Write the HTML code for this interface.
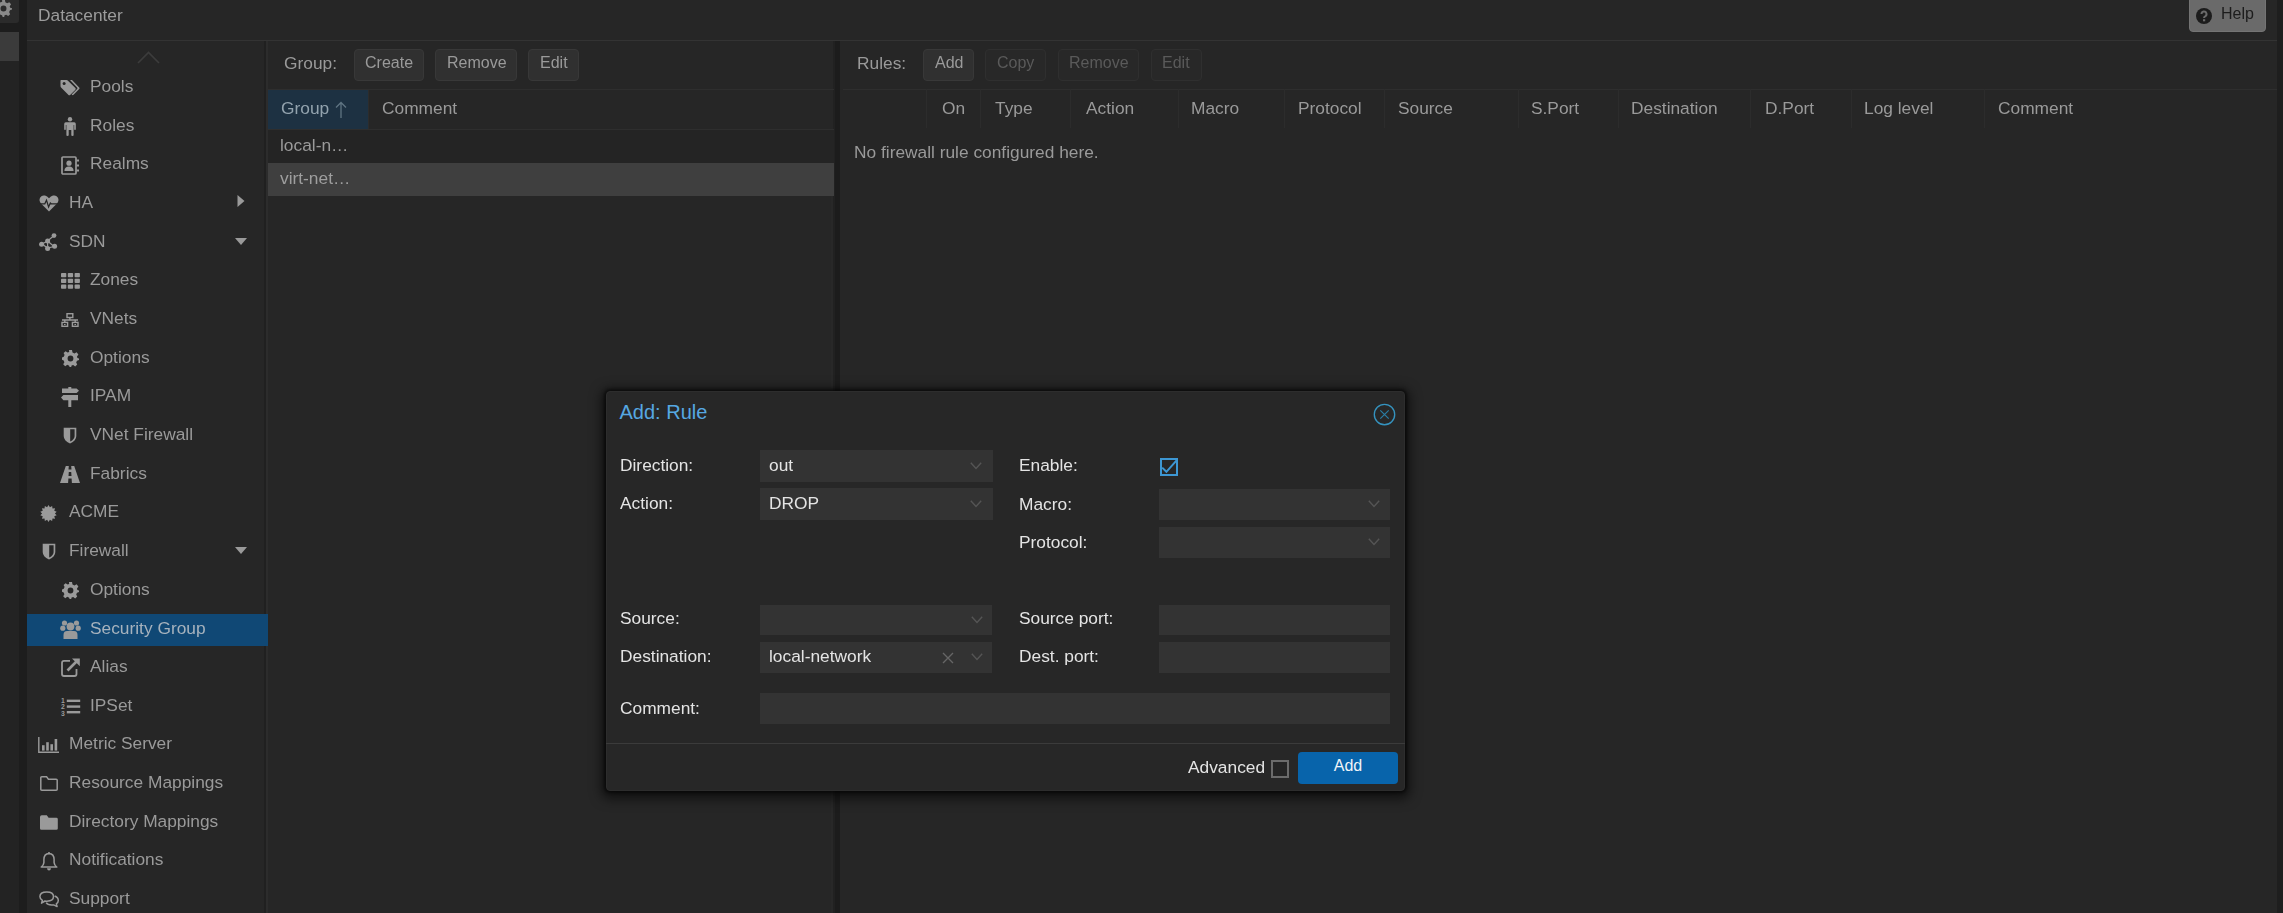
<!DOCTYPE html>
<html><head><meta charset="utf-8">
<style>
html,body{margin:0;padding:0;width:2283px;height:913px;overflow:hidden;background:#262626;}
body{position:relative;font-family:"Liberation Sans",sans-serif;font-size:17.33px;line-height:17.33px;color:#9a9a9a;}
.a{position:absolute;}
.t{position:absolute;will-change:transform;white-space:nowrap;font-size:17.33px;line-height:17.33px;}
.bt{font-size:16px;line-height:16px;}
.ico{position:absolute;overflow:visible;}
.btn{position:absolute;box-sizing:border-box;top:49px;height:32px;background:#303030;border:1px solid #383838;border-radius:4px;}
.btn.dis{background:#282828;border-color:#2f2f2f;}
.hsep{position:absolute;top:89px;height:39px;width:1px;background:#2c2c2c;}
.lbl{position:absolute;will-change:transform;white-space:nowrap;color:#e4e4e4;font-size:17.33px;line-height:17.33px;}
.fld{position:absolute;box-sizing:border-box;background:#333333;}
</style></head>
<body>
<!-- left strip -->
<div class="a" style="left:0;top:0;width:27px;height:913px;background:#1d1d1d"></div>
<div class="a" style="left:0;top:0;width:19px;height:23px;background:#2b2b2b;border-radius:0 0 3px 0"></div>
<svg class="ico" style="left:-5.5px;top:0px" width="17" height="17" viewBox="0 0 20 20"><path fill="#8a8a8a" fill-rule="evenodd" d="M8.3 0 H11.7 L12.2 2.7 Q13.4 3.1 14.3 3.8 L16.8 2.6 L18.9 5 L17.3 7.3 Q17.7 8.4 17.8 9 L20 9.7 V11.3 L17.6 12.2 Q17.2 13.3 16.6 14.2 L17.8 16.7 L15.5 18.8 L13.2 17.3 Q12.3 17.7 11.3 18 L10.8 20 H9 L8.3 18 Q7.1 17.7 6.3 17.1 L3.8 18.7 L1.5 16.6 L2.9 14.1 Q2.3 13.2 2 12.2 L0 11.4 V8.6 L2.1 7.9 Q2.5 6.7 3.1 5.9 L1.9 3.5 L4.2 1.4 L6.6 2.9 Q7.5 2.4 8.5 2.2 Z M10 6.5 A3.5 3.5 0 1 0 10 13.5 A3.5 3.5 0 1 0 10 6.5Z"/></svg>
<div class="a" style="left:0;top:32px;width:19px;height:29px;background:#3b3b3b"></div>
<div class="a" style="left:0;top:61px;width:19px;height:852px;background:#232323"></div>

<!-- header -->
<div class="a" style="left:27px;top:0;width:2250px;height:41px;background:#262626"></div>
<div class="t" style="left:37.8px;top:6.8px;color:#9c9c9c">Datacenter</div>
<div class="a" style="left:27px;top:40px;width:2250px;height:1px;background:#333333"></div>
<div class="a" style="left:2277px;top:0;width:6px;height:913px;background:#1e1e1e"></div>

<!-- help button -->
<div class="a" style="left:2189px;top:-4px;width:77px;height:36px;box-sizing:border-box;background:#6a6a6a;border:1px solid #747474;border-radius:4px"></div>
<svg class="ico" style="left:2196px;top:8px" width="16" height="16" viewBox="0 0 16 16"><circle cx="8" cy="8" r="8" fill="#1c1c1c"/><path d="M5.5 6.1a2.5 2.5 0 1 1 3.6 2.2c-.7.3-1 .6-1 1.3v.5" stroke="#6a6a6a" stroke-width="2" fill="none"/><rect x="7" y="11.2" width="2.2" height="2.1" fill="#6a6a6a"/></svg>
<div class="t bt" style="left:2221.4px;top:5.7px;color:#1c1c1c">Help</div>

<!-- nav panel -->
<div class="a" style="left:264px;top:41px;width:2px;height:872px;background:#202020"></div>
<div class="a" style="left:266px;top:41px;width:2px;height:872px;background:#2c2c2c"></div>
<div class="t" style="left:89.5px;top:78.10px;color:#9a9a9a">Pools</div>
<svg class="ico" style="left:60.0px;top:79.3px" width="20" height="17" viewBox="0 0 20 17"><path d="M0.5 1.5 L0.5 7 Q0.5 8 1.3 8.8 L8.5 16 Q9.3 16.7 10.1 16 L15.4 10.7 Q16.1 9.9 15.4 9.1 L8.2 1.9 Q7.4 1.1 6.4 1.1 L1 1.1 Z" fill="#9a9a9a"/><circle cx="4.1" cy="4.6" r="1.5" fill="#262626"/><path d="M10 1.1 L12 1.1 L19.2 8.4 Q20 9.3 19.2 10.1 L13.5 15.8 Q12.7 16.6 11.9 15.8 L11.6 15.6 L17.1 10.1 Q17.9 9.3 17.1 8.4 Z" fill="#9a9a9a"/></svg>
<div class="t" style="left:89.5px;top:116.76px;color:#9a9a9a">Roles</div>
<svg class="ico" style="left:64.0px;top:117.0px" width="12" height="19" viewBox="0 0 12 19"><circle cx="6" cy="2.3" r="2.2" fill="#9a9a9a"/><path d="M1.8 5.3 H10.2 Q11.8 5.3 11.8 7 V12.3 Q11.8 13 11 13 Q10.2 13 10.2 12.3 V8 H9.6 V18.2 Q9.6 19 8.6 19 Q7.3 19 7.3 18.2 V13 H4.7 V18.2 Q4.7 19 3.4 19 Q2.4 19 2.4 18.2 V8 H1.8 V12.3 Q1.8 13 1 13 Q0.2 13 0.2 12.3 V7 Q0.2 5.3 1.8 5.3Z" fill="#9a9a9a"/></svg>
<div class="t" style="left:89.5px;top:155.42px;color:#9a9a9a">Realms</div>
<svg class="ico" style="left:61.0px;top:155.6px" width="18" height="19" viewBox="0 0 18 19"><rect x="1" y="1" width="14" height="17" rx="1" fill="none" stroke="#9a9a9a" stroke-width="1.7"/><circle cx="8" cy="7.2" r="2.6" fill="#9a9a9a"/><path d="M3.4 15 Q3.4 10.5 8 10.5 Q12.6 10.5 12.6 15Z" fill="#9a9a9a"/><rect x="15.5" y="3.5" width="2.5" height="2" fill="#9a9a9a"/><rect x="15.5" y="8.5" width="2.5" height="2" fill="#9a9a9a"/><rect x="15.5" y="13.5" width="2.5" height="2" fill="#9a9a9a"/></svg>
<div class="t" style="left:68.5px;top:194.08px;color:#9a9a9a">HA</div>
<svg class="ico" style="left:38.5px;top:195.3px" width="20" height="17" viewBox="0 0 20 17"><path d="M10 16.5 L2 8.5 Q-0.5 5.5 1.2 2.5 Q3 -0.3 6 0.6 Q8.2 1.3 10 3.3 Q11.8 1.3 14 0.6 Q17 -0.3 18.8 2.5 Q20.5 5.5 18 8.5 Z" fill="#9a9a9a"/><path d="M0.5 8.8 H5.8 L7.5 5.2 L9.6 12 L11.3 8 L12.3 8.8 H19.5" fill="none" stroke="#262626" stroke-width="1.2"/></svg>
<div class="t" style="left:68.5px;top:232.74px;color:#9a9a9a">SDN</div>
<svg class="ico" style="left:38.5px;top:233.4px" width="20" height="18" viewBox="0 0 20 18"><path d="M3 11 L8.6 8 L15 2.5 M8.6 8 L15 13.5 M3 11 L8.6 15 L15 13.5 M8.6 8 L8.6 15" stroke="#9a9a9a" stroke-width="1.2" fill="none"/><circle cx="15" cy="2.6" r="2.4" fill="#9a9a9a"/><circle cx="8.6" cy="8" r="2.5" fill="#9a9a9a"/><circle cx="2.6" cy="11.2" r="2.5" fill="#9a9a9a"/><circle cx="15.6" cy="13.2" r="2.5" fill="#9a9a9a"/><circle cx="8.6" cy="15.5" r="2.5" fill="#9a9a9a"/></svg>
<div class="t" style="left:89.5px;top:271.40px;color:#9a9a9a">Zones</div>
<svg class="ico" style="left:60.5px;top:273.1px" width="19" height="16" viewBox="0 0 19 16"><rect x="0" y="0" width="5.3" height="4.2" rx="0.8" fill="#9a9a9a"/><rect x="6.8" y="0" width="5.3" height="4.2" rx="0.8" fill="#9a9a9a"/><rect x="13.6" y="0" width="5.3" height="4.2" rx="0.8" fill="#9a9a9a"/><rect x="0" y="5.8" width="5.3" height="4.2" rx="0.8" fill="#9a9a9a"/><rect x="6.8" y="5.8" width="5.3" height="4.2" rx="0.8" fill="#9a9a9a"/><rect x="13.6" y="5.8" width="5.3" height="4.2" rx="0.8" fill="#9a9a9a"/><rect x="0" y="11.6" width="5.3" height="4.2" rx="0.8" fill="#9a9a9a"/><rect x="6.8" y="11.6" width="5.3" height="4.2" rx="0.8" fill="#9a9a9a"/><rect x="13.6" y="11.6" width="5.3" height="4.2" rx="0.8" fill="#9a9a9a"/></svg>
<div class="t" style="left:89.5px;top:310.06px;color:#9a9a9a">VNets</div>
<svg class="ico" style="left:61.0px;top:312.8px" width="18" height="14" viewBox="0 0 18 14"><rect x="6" y="0.7" width="5.8" height="3.8" fill="none" stroke="#9a9a9a" stroke-width="1.4"/><path d="M8.9 4.5 V6.6 M1 7 H17 M3.8 7 V9 M14.2 7 V9" stroke="#9a9a9a" stroke-width="1.4" fill="none"/><rect x="1" y="9.4" width="5.6" height="3.9" fill="none" stroke="#9a9a9a" stroke-width="1.4"/><rect x="11.4" y="9.4" width="5.6" height="3.9" fill="none" stroke="#9a9a9a" stroke-width="1.4"/><rect x="3" y="11" width="1.6" height="1" fill="#9a9a9a"/><rect x="13.4" y="11" width="1.6" height="1" fill="#9a9a9a"/></svg>
<div class="t" style="left:89.5px;top:348.72px;color:#9a9a9a">Options</div>
<svg class="ico" style="left:61.5px;top:349.9px" width="17" height="17" viewBox="0 0 17 17"><path fill="#9a9a9a" fill-rule="evenodd" d="M7 0 H10 L10.5 2.4 Q11.6 2.8 12.4 3.4 L14.6 2.3 L16.4 4.4 L15 6.5 Q15.3 7.5 15.4 8 L17 8.6 V10 L15 10.7 Q14.7 11.6 14.2 12.4 L15.2 14.6 L13.2 16.4 L11.2 15 Q10.4 15.4 9.6 15.6 L9.2 17 H7.6 L7 15.5 Q6 15.2 5.3 14.8 L3.2 16.2 L1.2 14.3 L2.4 12.2 Q1.9 11.4 1.7 10.5 L0 9.8 V7.4 L1.8 6.8 Q2.1 5.8 2.6 5.1 L1.6 3 L3.6 1.2 L5.6 2.5 Q6.4 2.1 7.2 1.9 Z M8.5 5.6 A2.9 2.9 0 1 0 8.5 11.4 A2.9 2.9 0 1 0 8.5 5.6Z"/></svg>
<div class="t" style="left:89.5px;top:387.38px;color:#9a9a9a">IPAM</div>
<svg class="ico" style="left:61.0px;top:387.1px" width="18" height="20" viewBox="0 0 18 20"><path fill="#9a9a9a" d="M7.3 0 H10.3 V1.6 H15.6 L18 3.8 L15.6 6 H1 V1.6 H7.3Z M2.4 8 H17 V13.2 H2.4 L0 10.6Z M7.3 13.2 H10.3 V20 H7.3Z"/></svg>
<div class="t" style="left:89.5px;top:426.04px;color:#9a9a9a">VNet Firewall</div>
<svg class="ico" style="left:63.0px;top:427.2px" width="14" height="17" viewBox="0 0 14 17"><path d="M0.7 0.7 H13.3 V9 Q13.3 13.5 7 16.6 Q0.7 13.5 0.7 9Z" fill="#9a9a9a"/><path d="M7.2 2.3 H11.6 V9 Q11.6 12.3 7.2 14.6Z" fill="#262626"/></svg>
<div class="t" style="left:89.5px;top:464.70px;color:#9a9a9a">Fabrics</div>
<svg class="ico" style="left:60.0px;top:465.9px" width="20" height="17" viewBox="0 0 20 17"><path fill="#9a9a9a" d="M5.8 0 H8.8 L8.5 3.5 H11.5 L11.2 0 H14.2 L20 17 H11.9 L11.6 12.5 H8.4 L8.1 17 H0Z M8.8 6 L8.5 10 H11.5 L11.2 6Z"/></svg>
<div class="t" style="left:68.5px;top:503.36px;color:#9a9a9a">ACME</div>
<svg class="ico" style="left:40.0px;top:504.6px" width="17" height="17" viewBox="0 0 17 17"><path fill="#9a9a9a" d="M8.50 0.10 L9.92 2.26 L12.14 0.93 L12.49 3.50 L15.07 3.26 L14.27 5.72 L16.69 6.63 L14.90 8.50 L16.69 10.37 L14.27 11.28 L15.07 13.74 L12.49 13.50 L12.14 16.07 L9.92 14.74 L8.50 16.90 L7.08 14.74 L4.86 16.07 L4.51 13.50 L1.93 13.74 L2.73 11.28 L0.31 10.37 L2.10 8.50 L0.31 6.63 L2.73 5.72 L1.93 3.26 L4.51 3.50 L4.86 0.93 L7.08 2.26Z"/></svg>
<div class="t" style="left:68.5px;top:542.02px;color:#9a9a9a">Firewall</div>
<svg class="ico" style="left:41.5px;top:543.2px" width="14" height="17" viewBox="0 0 14 17"><path d="M0.7 0.7 H13.3 V9 Q13.3 13.5 7 16.6 Q0.7 13.5 0.7 9Z" fill="#9a9a9a"/><path d="M7.2 2.3 H11.6 V9 Q11.6 12.3 7.2 14.6Z" fill="#262626"/></svg>
<div class="t" style="left:89.5px;top:580.68px;color:#9a9a9a">Options</div>
<svg class="ico" style="left:61.5px;top:581.9px" width="17" height="17" viewBox="0 0 17 17"><path fill="#9a9a9a" fill-rule="evenodd" d="M7 0 H10 L10.5 2.4 Q11.6 2.8 12.4 3.4 L14.6 2.3 L16.4 4.4 L15 6.5 Q15.3 7.5 15.4 8 L17 8.6 V10 L15 10.7 Q14.7 11.6 14.2 12.4 L15.2 14.6 L13.2 16.4 L11.2 15 Q10.4 15.4 9.6 15.6 L9.2 17 H7.6 L7 15.5 Q6 15.2 5.3 14.8 L3.2 16.2 L1.2 14.3 L2.4 12.2 Q1.9 11.4 1.7 10.5 L0 9.8 V7.4 L1.8 6.8 Q2.1 5.8 2.6 5.1 L1.6 3 L3.6 1.2 L5.6 2.5 Q6.4 2.1 7.2 1.9 Z M8.5 5.6 A2.9 2.9 0 1 0 8.5 11.4 A2.9 2.9 0 1 0 8.5 5.6Z"/></svg>
<div class="a" style="left:27px;top:614px;width:240.5px;height:32px;background:#104875"></div>
<div class="t" style="left:89.5px;top:619.94px;color:#a6b2bd">Security Group</div>
<svg class="ico" style="left:59.5px;top:619.5px" width="21" height="19" viewBox="0 0 21 19"><circle cx="4.5" cy="3" r="2.6" fill="#9a9a9a"/><circle cx="16.5" cy="3" r="2.6" fill="#9a9a9a"/><circle cx="2.8" cy="8.2" r="2.6" fill="#9a9a9a"/><circle cx="18.2" cy="8.2" r="2.6" fill="#9a9a9a"/><circle cx="10.5" cy="6.5" r="3.9" fill="#9a9a9a"/><path d="M3.5 19 V15 Q3.5 11 7 11 H14 Q17.5 11 17.5 15 V19 Z" fill="#9a9a9a" /><rect x="4" y="17" width="13" height="2" rx="1" fill="#9a9a9a"/></svg>
<div class="t" style="left:89.5px;top:658.00px;color:#9a9a9a">Alias</div>
<svg class="ico" style="left:60.5px;top:658.2px" width="19" height="19" viewBox="0 0 19 19"><path d="M9 2.8 H3 Q1 2.8 1 4.8 V16 Q1 18 3 18 H13.5 Q15.5 18 15.5 16 V11" fill="none" stroke="#9a9a9a" stroke-width="1.8"/><path d="M6.5 12.5 L16 3" stroke="#9a9a9a" stroke-width="2.6" fill="none"/><path d="M11 0.5 H18.8 V8.3Z" fill="#9a9a9a"/></svg>
<div class="t" style="left:89.5px;top:696.66px;color:#9a9a9a">IPSet</div>
<svg class="ico" style="left:60.5px;top:696.9px" width="19" height="19" viewBox="0 0 19 19"><text x="0" y="5.6" font-family="Liberation Sans" font-size="6.8" font-weight="bold" fill="#9a9a9a">1</text><text x="0" y="12" font-family="Liberation Sans" font-size="6.8" font-weight="bold" fill="#9a9a9a">2</text><text x="0" y="18.6" font-family="Liberation Sans" font-size="6.8" font-weight="bold" fill="#9a9a9a">3</text><rect x="5.8" y="2.6" width="13.4" height="2.4" fill="#9a9a9a"/><rect x="5.8" y="8.4" width="13.4" height="2.4" fill="#9a9a9a"/><rect x="5.8" y="14" width="13.4" height="2.4" fill="#9a9a9a"/></svg>
<div class="t" style="left:68.5px;top:735.32px;color:#9a9a9a">Metric Server</div>
<svg class="ico" style="left:38.0px;top:737.0px" width="21" height="16" viewBox="0 0 21 16"><path d="M0.8 0 V15.2 H21" stroke="#9a9a9a" stroke-width="1.4" fill="none"/><rect x="4" y="8.2" width="2.6" height="5.4" fill="#9a9a9a"/><rect x="8.2" y="5.2" width="2.6" height="8.4" fill="#9a9a9a"/><rect x="12.4" y="7.2" width="2.6" height="6.4" fill="#9a9a9a"/><rect x="16.6" y="2" width="2.6" height="11.6" fill="#9a9a9a"/></svg>
<div class="t" style="left:68.5px;top:773.98px;color:#9a9a9a">Resource Mappings</div>
<svg class="ico" style="left:39.5px;top:776.2px" width="18" height="15" viewBox="0 0 18 15"><path d="M1.8 0.8 H6.6 L8.4 3.2 H16.2 Q17.2 3.2 17.2 4.2 V13.2 Q17.2 14.2 16.2 14.2 H1.8 Q0.8 14.2 0.8 13.2 V1.8 Q0.8 0.8 1.8 0.8Z" fill="none" stroke="#9a9a9a" stroke-width="1.5"/></svg>
<div class="t" style="left:68.5px;top:812.64px;color:#9a9a9a">Directory Mappings</div>
<svg class="ico" style="left:39.5px;top:814.8px" width="18" height="15" viewBox="0 0 18 15"><path d="M1.8 0.3 H6.8 L8.6 2.8 H16.4 Q17.8 2.8 17.8 4.2 V13.4 Q17.8 14.8 16.4 14.8 H1.4 Q0 14.8 0 13.4 V2.1 Q0 0.3 1.8 0.3Z" fill="#9a9a9a"/></svg>
<div class="t" style="left:68.5px;top:851.30px;color:#9a9a9a">Notifications</div>
<svg class="ico" style="left:39.5px;top:851.5px" width="18" height="19" viewBox="0 0 18 19"><path d="M9 1.4 Q14.1 1.6 14.1 7.6 V10.6 Q14.3 13.2 16.8 15 H1.2 Q3.7 13.2 3.9 10.6 V7.6 Q3.9 1.6 9 1.4Z" fill="none" stroke="#9a9a9a" stroke-width="1.5" stroke-linejoin="round"/><circle cx="9" cy="1.2" r="1.1" fill="#9a9a9a"/><path d="M7 16.2 Q7.3 18.4 9 18.4 Q10.7 18.4 11 16.2Z" fill="#9a9a9a"/></svg>
<div class="t" style="left:68.5px;top:889.96px;color:#9a9a9a">Support</div>
<svg class="ico" style="left:38.5px;top:891.2px" width="20" height="17" viewBox="0 0 20 17"><path d="M7.8 1 Q14.5 1 14.5 5.6 Q14.5 10.2 7.8 10.2 Q6.9 10.2 6 10 L2.5 12.2 L3.4 9.4 Q0.9 8.1 0.9 5.6 Q0.9 1 7.8 1Z" fill="none" stroke="#9a9a9a" stroke-width="1.5" stroke-linejoin="round"/><path d="M15.6 5 Q19.3 6.3 19.3 9.4 Q19.3 11.6 17.3 12.8 L18.1 15.6 L14.6 13.9 Q13.6 14 12.6 14 Q8.6 14 7.2 11.6" fill="none" stroke="#9a9a9a" stroke-width="1.5" stroke-linejoin="round"/></svg>
<svg class="ico" style="left:237px;top:195px" width="8" height="12" viewBox="0 0 8 12"><path d="M0.5 0 L7.5 6 L0.5 12Z" fill="#9a9a9a"/></svg>
<svg class="ico" style="left:235px;top:237.9px" width="12" height="7" viewBox="0 0 12 7"><path d="M0 0 H12 L6 7Z" fill="#9a9a9a"/></svg>
<svg class="ico" style="left:235px;top:547.2px" width="12" height="7" viewBox="0 0 12 7"><path d="M0 0 H12 L6 7Z" fill="#9a9a9a"/></svg>
<svg class="ico" style="left:137px;top:51px" width="23" height="13" viewBox="0 0 23 13"><path d="M1 12 L11.5 1.5 L22 12" fill="none" stroke="#3c3c3c" stroke-width="1.6"/></svg>

<!-- splitter -->
<div class="a" style="left:831px;top:130px;width:2px;height:783px;background:#282828"></div>
<div class="a" style="left:833px;top:41px;width:2px;height:872px;background:#212121"></div>
<div class="a" style="left:835px;top:41px;width:5px;height:872px;background:#1c1c1c"></div>
<!-- group panel -->
<div class="t" style="left:283.6px;top:54.7px">Group:</div>
<div class="btn" style="left:354px;width:70px"></div>
<div class="t bt" style="left:364.9px;top:55px">Create</div>
<div class="btn" style="left:435px;width:82px"></div>
<div class="t bt" style="left:446.6px;top:55px">Remove</div>
<div class="btn" style="left:528px;width:51px"></div>
<div class="t bt" style="left:539.7px;top:55px">Edit</div>
<div class="a" style="left:268px;top:89px;width:566px;height:1px;background:#2e2e2e"></div>
<div class="a" style="left:268px;top:90px;width:100px;height:39px;background:#1d3142"></div>
<div class="t" style="left:281.4px;top:99.9px;color:#93a3ae">Group</div>
<svg class="ico" style="left:335px;top:101px" width="12" height="17" viewBox="0 0 12 17"><path d="M6 1.5 V17 M1 6.5 L6 1.5 L11 6.5" stroke="#5f7482" stroke-width="1.3" fill="none"/></svg>
<div class="hsep" style="left:368px;top:90px"></div>
<div class="t" style="left:381.6px;top:99.9px">Comment</div>
<div class="a" style="left:268px;top:129px;width:566px;height:1px;background:#2e2e2e"></div>
<div class="a" style="left:268px;top:130px;width:566px;height:33px;background:#242424"></div>
<div class="t" style="left:279.6px;top:137.1px">local-n…</div>
<div class="a" style="left:268px;top:163px;width:566px;height:33px;background:#3f3f3f"></div>
<div class="t" style="left:280px;top:170.1px;color:#9e9e9e">virt-net…</div>


<!-- rules panel -->
<div class="t" style="left:857px;top:54.7px">Rules:</div>
<div class="btn" style="left:923px;width:51px"></div>
<div class="t bt" style="left:934.5px;top:55px">Add</div>
<div class="btn dis" style="left:985px;width:61px"></div>
<div class="t bt" style="left:996.9px;top:55px;color:#5a5a5a">Copy</div>
<div class="btn dis" style="left:1058px;width:81px"></div>
<div class="t bt" style="left:1069px;top:55px;color:#5a5a5a">Remove</div>
<div class="btn dis" style="left:1151px;width:51px"></div>
<div class="t bt" style="left:1162.3px;top:55px;color:#5a5a5a">Edit</div>
<div class="a" style="left:843px;top:89px;width:1434px;height:1px;background:#2e2e2e"></div>
<div class="hsep" style="left:926px"></div>
<div class="hsep" style="left:980px"></div>
<div class="hsep" style="left:1070px"></div>
<div class="hsep" style="left:1178px"></div>
<div class="hsep" style="left:1284px"></div>
<div class="hsep" style="left:1384px"></div>
<div class="hsep" style="left:1518px"></div>
<div class="hsep" style="left:1618px"></div>
<div class="hsep" style="left:1750px"></div>
<div class="hsep" style="left:1851px"></div>
<div class="hsep" style="left:1984px"></div>
<div class="t" style="left:941.7px;top:99.9px">On</div>
<div class="t" style="left:995px;top:99.9px">Type</div>
<div class="t" style="left:1085.9px;top:99.9px">Action</div>
<div class="t" style="left:1190.6px;top:99.9px">Macro</div>
<div class="t" style="left:1297.8px;top:99.9px">Protocol</div>
<div class="t" style="left:1398px;top:99.9px">Source</div>
<div class="t" style="left:1530.8px;top:99.9px">S.Port</div>
<div class="t" style="left:1631.2px;top:99.9px">Destination</div>
<div class="t" style="left:1764.6px;top:99.9px">D.Port</div>
<div class="t" style="left:1864.3px;top:99.9px">Log level</div>
<div class="t" style="left:1997.9px;top:99.9px">Comment</div>
<div class="t" style="left:854px;top:144px">No firewall rule configured here.</div>

<!-- dialog -->
<div class="a" style="left:605.5px;top:390.5px;width:799px;height:400px;background:#272727;border-radius:4px;border:1px solid #2d2d2d;box-sizing:border-box;box-shadow:0 0 3px 2px rgba(0,0,0,0.5),0 3px 12px 5px rgba(0,0,0,0.55)"></div>
<div class="a" style="left:619.5px;top:401.7px;font-size:20px;line-height:20px;white-space:nowrap;color:#56a8e2">Add: Rule</div>
<svg class="ico" style="left:1373px;top:403px" width="23" height="23" viewBox="0 0 23 23"><circle cx="11.5" cy="11.5" r="10.2" stroke="#3593bf" stroke-width="1.35" fill="none"/><path d="M7.3 7.3 L15.7 15.7 M15.7 7.3 L7.3 15.7" stroke="#2a7ca4" stroke-width="1.2"/></svg>

<div class="lbl" style="left:620.3px;top:457px">Direction:</div>
<div class="fld" style="left:759.5px;top:450px;width:233px;height:31.5px"></div>
<div class="lbl" style="left:769px;top:457px">out</div>
<div class="lbl" style="left:620.3px;top:495px">Action:</div>
<div class="fld" style="left:759.5px;top:488.2px;width:233px;height:31.5px"></div>
<div class="lbl" style="left:768.7px;top:495px">DROP</div>

<div class="lbl" style="left:1018.7px;top:456.9px">Enable:</div>
<svg class="ico" style="left:1159px;top:457px" width="20" height="20" viewBox="0 0 20 20"><rect x="2" y="2" width="16" height="16" fill="none" stroke="#3d97d3" stroke-width="2"/><path d="M3.2 10.6 L7.4 14.8 L17.6 3.4" stroke="#3d97d3" stroke-width="2" fill="none"/></svg>
<div class="lbl" style="left:1018.7px;top:495.8px">Macro:</div>
<div class="fld" style="left:1159px;top:489px;width:231px;height:31px"></div>
<div class="lbl" style="left:1018.7px;top:533.8px">Protocol:</div>
<div class="fld" style="left:1159px;top:527px;width:231px;height:31px"></div>

<div class="lbl" style="left:620.3px;top:610.2px">Source:</div>
<div class="fld" style="left:760px;top:604.5px;width:232px;height:30.5px"></div>
<div class="lbl" style="left:620.3px;top:648.1px">Destination:</div>
<div class="fld" style="left:760px;top:642px;width:232px;height:31px"></div>
<div class="lbl" style="left:768.5px;top:648px">local-network</div>
<div class="lbl" style="left:1018.7px;top:610.2px">Source port:</div>
<div class="fld" style="left:1159px;top:604.5px;width:231px;height:30.5px"></div>
<div class="lbl" style="left:1018.7px;top:648px">Dest. port:</div>
<div class="fld" style="left:1159px;top:642px;width:231px;height:31px"></div>

<div class="lbl" style="left:620.3px;top:700.2px">Comment:</div>
<div class="fld" style="left:760px;top:693.3px;width:630px;height:30.5px"></div>

<!-- chevrons -->
<svg class="ico" style="left:970px;top:461.5px" width="12" height="8" viewBox="0 0 12 8"><path d="M0.8 0.8 L6 6.5 L11.2 0.8" stroke="#555555" stroke-width="1.4" fill="none"/></svg>
<svg class="ico" style="left:970px;top:499.5px" width="12" height="8" viewBox="0 0 12 8"><path d="M0.8 0.8 L6 6.5 L11.2 0.8" stroke="#555555" stroke-width="1.4" fill="none"/></svg>
<svg class="ico" style="left:1368px;top:500px" width="12" height="8" viewBox="0 0 12 8"><path d="M0.8 0.8 L6 6.5 L11.2 0.8" stroke="#555555" stroke-width="1.4" fill="none"/></svg>
<svg class="ico" style="left:1368px;top:538px" width="12" height="8" viewBox="0 0 12 8"><path d="M0.8 0.8 L6 6.5 L11.2 0.8" stroke="#555555" stroke-width="1.4" fill="none"/></svg>
<svg class="ico" style="left:971px;top:615.5px" width="12" height="8" viewBox="0 0 12 8"><path d="M0.8 0.8 L6 6.5 L11.2 0.8" stroke="#555555" stroke-width="1.4" fill="none"/></svg>
<svg class="ico" style="left:971px;top:653px" width="12" height="8" viewBox="0 0 12 8"><path d="M0.8 0.8 L6 6.5 L11.2 0.8" stroke="#555555" stroke-width="1.4" fill="none"/></svg>
<svg class="ico" style="left:941.5px;top:651.5px" width="12" height="12" viewBox="0 0 12 12"><path d="M1 1 L11 11 M11 1 L1 11" stroke="#666" stroke-width="1.4" fill="none"/></svg>

<!-- footer -->
<div class="a" style="left:605.5px;top:743px;width:799px;height:1px;background:#3b3b3b"></div>
<div class="lbl" style="left:1187.8px;top:759.2px">Advanced</div>
<div class="a" style="left:1271px;top:760px;width:18px;height:18px;box-sizing:border-box;border:2px solid #6b6b6b;background:#252525"></div>
<div class="a" style="left:1298px;top:752px;width:100px;height:31.5px;background:#0864ab;border-radius:4px"></div>
<div class="a" style="left:1298px;top:757.9px;width:100px;text-align:center;font-size:16px;line-height:16px;color:#f0f4f8">Add</div>
</body></html>
